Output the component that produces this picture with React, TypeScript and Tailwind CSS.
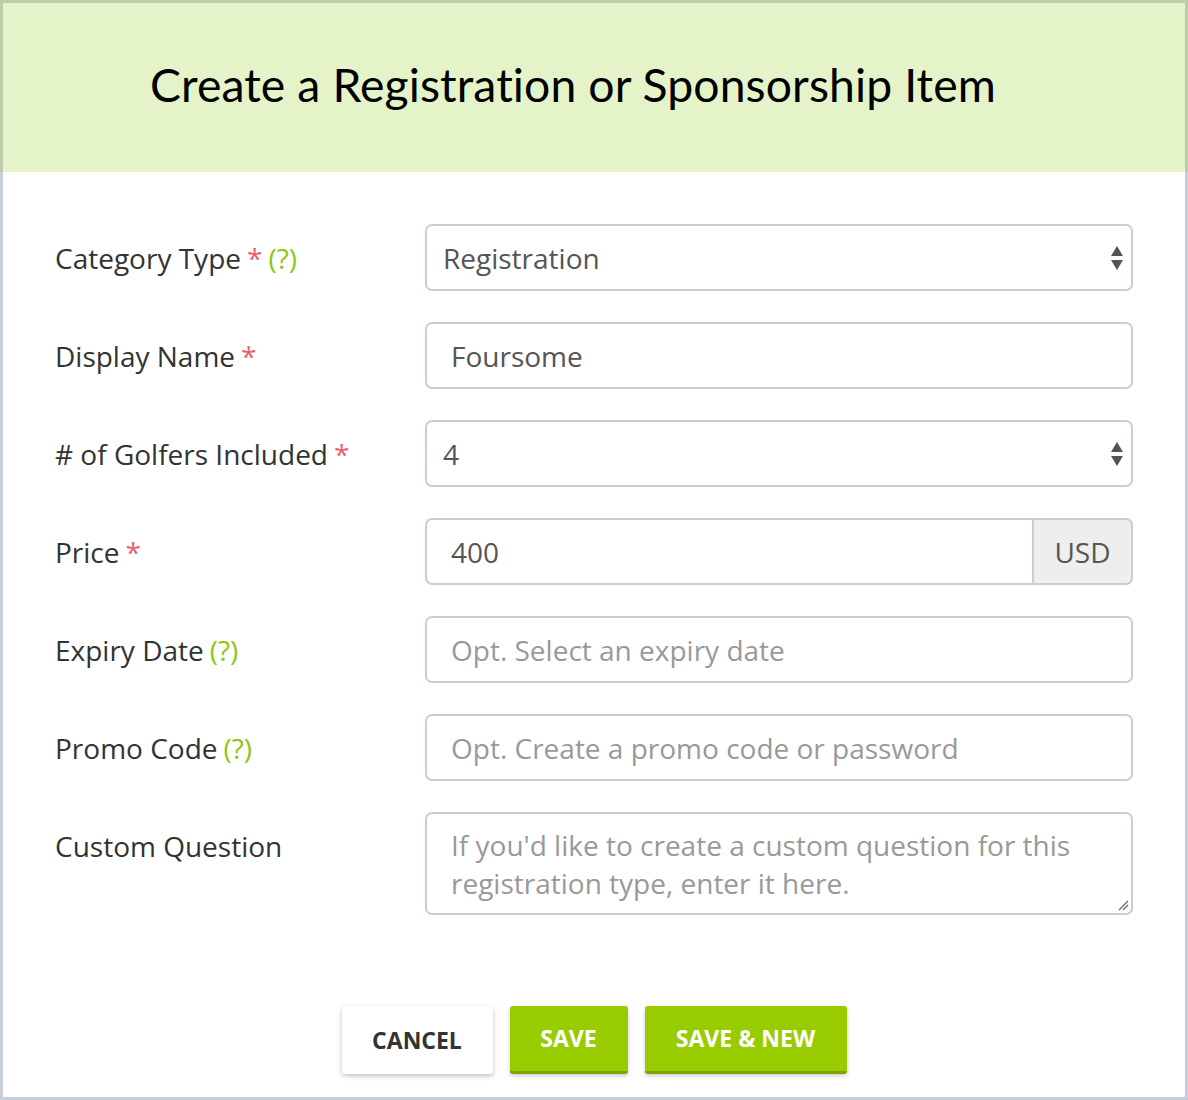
import React from 'react';

const Req = () => <span className="text-[#e8636d] ml-[6px]">*</span>;
const Help = () => <span className="text-[#8cc811] ml-[6px]">(?)</span>;

const SelectArrows = () => (
  <svg width="14" height="26" viewBox="0 0 14 26" className="shrink-0">
    <path d="M7 1 L13 11 L1 11 Z" fill="#555" />
    <path d="M1 15 L13 15 L7 25 Z" fill="#555" />
  </svg>
);

const Row = ({ label, children }: { label: React.ReactNode; children: React.ReactNode }) => (
  <div className="flex items-start">
    <div className="w-[370px] h-[67px] flex items-center shrink-0 text-[#333]">{label}</div>
    <div className="flex-1">{children}</div>
  </div>
);

const boxCls = 'h-[67px] w-full border-2 border-[#c7cedb] rounded-[7px] bg-white flex items-center';

export default function App() {
  return (
    <div className="w-[1188px] h-[1100px] bg-white border-[3px] border-t-0 border-[#c6cddb] flex flex-col font-['Open_Sans',sans-serif]">
      {/* Header */}
      <div className="h-[172px] -mx-[3px] bg-[#e5f3c8] border-[3px] border-b-0 border-[#b8cda8] flex items-center pl-[147px] pb-[6px]">
        <h1 className="font-['Lato',sans-serif] text-[46.3px] text-black tracking-[0.1px]">
          Create a Registration or Sponsorship Item
        </h1>
      </div>

      {/* Form */}
      <div className="pl-[52px] pr-[52px] pt-[52px] flex flex-col gap-[31px] text-[28px]">
        <Row label={<span>Category Type<Req /><Help /></span>}>
          <div className={`${boxCls} pl-[16px] pr-[7px] justify-between text-[#555]`}>
            <span>Registration</span>
            <SelectArrows />
          </div>
        </Row>
        <Row label={<span>Display Name<Req /></span>}>
          <div className={`${boxCls} pl-[24px] text-[#555]`}>Foursome</div>
        </Row>
        <Row label={<span># of Golfers Included<Req /></span>}>
          <div className={`${boxCls} pl-[16px] pr-[7px] justify-between text-[#555]`}>
            <span>4</span>
            <SelectArrows />
          </div>
        </Row>
        <Row label={<span>Price<Req /></span>}>
          <div className="h-[67px] w-full flex">
            <div className="flex-1 border-2 border-r-0 border-[#c7cedb] rounded-l-[7px] flex items-center pl-[24px] text-[#555]">
              400
            </div>
            <div className="w-[101px] border-2 border-[#cccccc] rounded-r-[7px] bg-[#eeeeee] flex items-center justify-center text-[#555] border-l-[#c7cedb]">
              USD
            </div>
          </div>
        </Row>
        <Row label={<span>Expiry Date<Help /></span>}>
          <div className={`${boxCls} pl-[24px] text-[#999]`}>Opt. Select an expiry date</div>
        </Row>
        <Row label={<span>Promo Code<Help /></span>}>
          <div className={`${boxCls} pl-[24px] text-[#999]`}>Opt. Create a promo code or password</div>
        </Row>
        <Row label={<span>Custom Question</span>}>
          <div className="relative h-[103px] w-full border-2 border-[#c7cedb] rounded-[7px] pl-[24px] pr-[30px] pt-[12px] text-[#999] leading-[38px]">
            If you'd like to create a custom question for this registration type, enter it here.
            <svg width="12" height="12" viewBox="0 0 12 12" className="absolute right-[2px] bottom-[2px]">
              <path d="M11 2 L2 11 M11 6 L6 11" stroke="#666" strokeWidth="1.2" />
            </svg>
          </div>
        </Row>
      </div>

      {/* Buttons */}
      <div className="mt-[91px] flex justify-center gap-[17px] text-[23px] font-bold">
        <button className="h-[68px] w-[151px] bg-white text-[#333] uppercase rounded-[3px] shadow-[0_2px_5px_rgba(0,0,0,0.25)]">
          Cancel
        </button>
        <button className="h-[68px] w-[118px] bg-[#99cc00] text-white uppercase rounded-[3px] border-b-[3px] border-[#7ba600] shadow-[0_2px_4px_rgba(0,0,0,0.2)]">
          Save
        </button>
        <button className="h-[68px] w-[202px] bg-[#99cc00] text-white uppercase rounded-[3px] border-b-[3px] border-[#7ba600] shadow-[0_2px_4px_rgba(0,0,0,0.2)]">
          Save &amp; New
        </button>
      </div>
    </div>
  );
}
